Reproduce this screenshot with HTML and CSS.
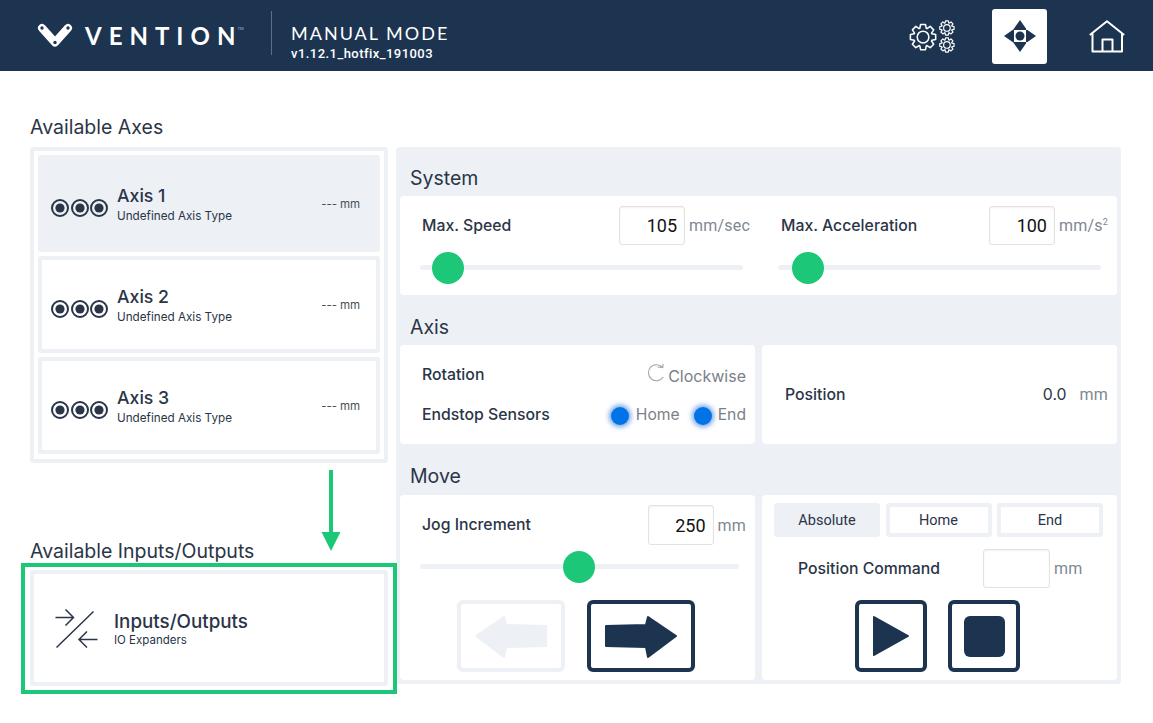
FILE: index.html
```html
<!DOCTYPE html>
<html lang="en">
<head>
<meta charset="utf-8">
<title>Manual Mode</title>
<link rel="stylesheet" href="styles.css">
</head>
<body>
<header class="topbar">
  <div class="brand">
    <svg class="brand-mark" viewBox="0 0 36 26" width="36" height="26">
      <path class="mark-line" d="M5 5 L18 19.5 L31 5"/>
      <circle class="mark-hole" cx="5" cy="5" r="1.7"/>
      <circle class="mark-hole" cx="31" cy="5" r="1.7"/>
      <circle class="mark-hole" cx="18" cy="19.5" r="1.7"/>
    </svg>
    <span class="brand-name">VENTIO<span class="brand-last">N</span></span><span class="brand-tm">TM</span>
  </div>
  <div class="mode">
    <div class="mode-name">MANUAL MODE</div>
    <div class="mode-version">v1.12.1_hotfix_191003</div>
  </div>
  <nav class="nav">
    <svg class="nav-gears" viewBox="0 0 46 33" width="46" height="33">
      <defs>
        <g id="gear">
          <polygon points="9.26,4.48 9.9,1.2 14.1,1.2 14.74,4.48 15.38,4.75 18.15,2.88 21.12,5.85 19.25,8.62 19.52,9.26 22.8,9.9 22.8,14.1 19.52,14.74 19.25,15.38 21.12,18.15 18.15,21.12 15.38,19.25 14.74,19.52 14.1,22.8 9.9,22.8 9.26,19.52 8.62,19.25 5.85,21.12 2.88,18.15 4.75,15.38 4.48,14.74 1.2,14.1 1.2,9.9 4.48,9.26 4.75,8.62 2.88,5.85 5.85,2.88 8.62,4.75"/>
          <circle cx="12" cy="12" r="5"/>
        </g>
      </defs>
      <use href="#gear" class="gear-line gear-big" transform="translate(0 3) scale(1.17)"/>
      <use href="#gear" class="gear-line gear-small" transform="translate(30 0) scale(0.66)"/>
      <use href="#gear" class="gear-line gear-small" transform="translate(30 17) scale(0.66)"/>
    </svg>
    <div class="nav-active">
      <svg viewBox="0 0 32 32" width="32" height="32">
        <path class="nav-solid" d="M16 0 L23 10 H9 Z M16 32 L9 22 H23 Z M0 16 L10 9 V23 Z M32 16 L22 9 V23 Z"/>
        <circle class="nav-solid" cx="16" cy="16" r="4.5"/>
      </svg>
    </div>
    <svg class="nav-home" viewBox="0 0 36 33" width="36" height="33">
      <path class="home-line" d="M0.8 15 L18 1.2 L35.2 15 M3.5 13 V31.5 H33 V13 M13.5 31.5 V19.5 H23.5 V31.5"/>
    </svg>
  </nav>
</header>

<main class="page">
  <aside class="side">
    <h2 class="heading">Available Axes</h2>
    <div class="axis-list">
      <div class="axis-item is-active">
        <span class="dots">
          <svg viewBox="0 0 18 18" width="18" height="18"><circle class="ring" cx="9" cy="9" r="8"/><circle class="pip" cx="9" cy="9" r="4.6"/></svg>
          <svg viewBox="0 0 18 18" width="18" height="18"><circle class="ring" cx="9" cy="9" r="8"/><circle class="pip" cx="9" cy="9" r="4.6"/></svg>
          <svg viewBox="0 0 18 18" width="18" height="18"><circle class="ring" cx="9" cy="9" r="8"/><circle class="pip" cx="9" cy="9" r="4.6"/></svg>
        </span>
        <span class="axis-text"><b class="axis-name">Axis 1</b><small class="axis-type">Undefined Axis Type</small></span>
        <span class="axis-pos">--- mm</span>
      </div>
      <div class="axis-item">
        <span class="dots">
          <svg viewBox="0 0 18 18" width="18" height="18"><circle class="ring" cx="9" cy="9" r="8"/><circle class="pip" cx="9" cy="9" r="4.6"/></svg>
          <svg viewBox="0 0 18 18" width="18" height="18"><circle class="ring" cx="9" cy="9" r="8"/><circle class="pip" cx="9" cy="9" r="4.6"/></svg>
          <svg viewBox="0 0 18 18" width="18" height="18"><circle class="ring" cx="9" cy="9" r="8"/><circle class="pip" cx="9" cy="9" r="4.6"/></svg>
        </span>
        <span class="axis-text"><b class="axis-name">Axis 2</b><small class="axis-type">Undefined Axis Type</small></span>
        <span class="axis-pos">--- mm</span>
      </div>
      <div class="axis-item">
        <span class="dots">
          <svg viewBox="0 0 18 18" width="18" height="18"><circle class="ring" cx="9" cy="9" r="8"/><circle class="pip" cx="9" cy="9" r="4.6"/></svg>
          <svg viewBox="0 0 18 18" width="18" height="18"><circle class="ring" cx="9" cy="9" r="8"/><circle class="pip" cx="9" cy="9" r="4.6"/></svg>
          <svg viewBox="0 0 18 18" width="18" height="18"><circle class="ring" cx="9" cy="9" r="8"/><circle class="pip" cx="9" cy="9" r="4.6"/></svg>
        </span>
        <span class="axis-text"><b class="axis-name">Axis 3</b><small class="axis-type">Undefined Axis Type</small></span>
        <span class="axis-pos">--- mm</span>
      </div>
    </div>
    <svg class="hint-arrow" viewBox="0 0 24 81" width="24" height="81">
      <path class="hint-shaft" d="M12 0 V66"/>
      <path class="hint-head" d="M2.5 62 H21.5 L12 81 Z"/>
    </svg>
    <h2 class="heading heading-io">Available Inputs/Outputs</h2>
    <div class="io-highlight">
      <div class="io-card">
        <svg class="io-icon" viewBox="0 0 44 42" width="44" height="42">
          <path class="io-line" d="M0.5 9.5 H18.5 M10.5 1.5 L18.5 9.5 L10.5 17.5 M38.5 3.5 L1.5 39.5 M42.5 31.5 H24 M32 23.5 L24 31.5 L32 39.5"/>
        </svg>
        <span class="axis-text"><b class="io-name">Inputs/Outputs</b><small class="io-type">IO Expanders</small></span>
      </div>
    </div>
  </aside>

  <section class="panel">
    <h2 class="heading section-title section-first">System</h2>
    <div class="card card-system">
      <div class="control">
        <div class="row">
          <span class="label">Max. Speed</span>
          <input class="num" value="105" aria-label="Max. Speed">
          <span class="unit">mm/sec</span>
        </div>
        <div class="track"><span class="thumb" style="left:8.7%"></span></div>
      </div>
      <div class="control">
        <div class="row">
          <span class="label">Max. Acceleration</span>
          <input class="num" value="100" aria-label="Max. Acceleration">
          <span class="unit">mm/s<sup class="sup">2</sup></span>
        </div>
        <div class="track"><span class="thumb" style="left:9.3%"></span></div>
      </div>
    </div>

    <h2 class="heading section-title">Axis</h2>
    <div class="split">
      <div class="card card-axis">
        <div class="status-row">
          <span class="label">Rotation</span>
          <span class="status status-rotation">
            <svg class="rotate-icon" viewBox="0 0 19 19" width="19" height="19">
              <path class="rotate-line" d="M16.5 3.5 A8 8 0 1 0 17.2 13 M11.5 3 L16.8 3.5 L17 0"/>
            </svg>
            <span class="status-text">Clockwise</span>
          </span>
        </div>
        <div class="status-row">
          <span class="label">Endstop Sensors</span>
          <span class="status status-sensors">
            <i class="led"></i><span class="status-text">Home</span>
            <i class="led led-end"></i><span class="status-text">End</span>
          </span>
        </div>
      </div>
      <div class="card card-position">
        <span class="label">Position</span>
        <span class="pos-value">0.0</span>
        <span class="unit pos-unit">mm</span>
      </div>
    </div>

    <h2 class="heading section-title section-move">Move</h2>
    <div class="split">
      <div class="card card-jog">
        <div class="control control-jog">
          <div class="row">
            <span class="label">Jog Increment</span>
            <input class="num num-tall" value="250" aria-label="Jog Increment">
            <span class="unit">mm</span>
          </div>
          <div class="track track-jog"><span class="thumb" style="left:49.8%"></span></div>
        </div>
        <div class="jog-buttons">
          <button class="icon-btn wide is-disabled" type="button" aria-label="Jog left">
            <svg viewBox="0 0 72 44" width="72" height="44"><path class="btn-shape" d="M71 12 L31 11 L29 3 L1 22 L29 43 L31 33 L71 32 Z"/></svg>
          </button>
          <button class="icon-btn wide" type="button" aria-label="Jog right">
            <svg viewBox="0 0 72 44" width="72" height="44"><path class="btn-shape" d="M1 12 L41 11 L43 3 L71 22 L43 43 L41 33 L1 32 Z"/></svg>
          </button>
        </div>
      </div>
      <div class="card card-command">
        <div class="tabs">
          <span class="tab is-active">Absolute</span>
          <span class="tab">Home</span>
          <span class="tab">End</span>
        </div>
        <div class="command-row">
          <span class="label">Position Command</span>
          <input class="num num-command" aria-label="Position Command">
          <span class="unit">mm</span>
        </div>
        <div class="command-buttons">
          <button class="icon-btn" type="button" aria-label="Play">
            <svg viewBox="0 0 38 42" width="38" height="42"><path class="btn-shape" d="M2 2 L36 21 L2 40 Z"/></svg>
          </button>
          <button class="icon-btn" type="button" aria-label="Stop">
            <span class="stop-square"></span>
          </button>
        </div>
      </div>
    </div>
  </section>
</main>
</body>
</html>
```

FILE: styles.css
```css
* { box-sizing: border-box; }
html, body { margin: 0; padding: 0; }
body {
  width: 1153px;
  height: 723px;
  overflow: hidden;
  background: #fff;
  color: #2a3547;
  font-family: "Inter", "Lato", sans-serif;
}

/* header */
.topbar {
  display: flex;
  align-items: center;
  height: 71px;
  padding-left: 37px;
  background: #1d3451;
  color: #fff;
}
.brand {
  display: flex;
  align-items: center;
  width: 235px;
  height: 44px;
  margin-top: -5px;
  border-right: 1px solid #5c6f86;
}
.brand-mark { flex: none; margin-top: 5px; }
.brand-name {
  margin-left: 12px;
  margin-top: 5px;
  font-family: "Lato", sans-serif;
  font-size: 24px;
  font-weight: 700;
  letter-spacing: 7px;
  line-height: 24px;
}
.brand-last { letter-spacing: 0; }
.mark-line { fill: none; stroke: #fff; stroke-width: 8; stroke-linecap: round; stroke-linejoin: round; }
.mark-hole { fill: #1d3451; }
.brand-tm { font-size: 4px; line-height: 5px; margin: -9px 0 0 2px; color: #aeb8c5; }
.mode { margin-left: 19px; margin-top: 14px; }
.mode-name {
  font-family: "Lato", sans-serif;
  font-size: 18px;
  letter-spacing: 2px;
  line-height: 20px;
}
.mode-version {
  font-family: "Roboto", sans-serif;
  font-size: 13px;
  font-weight: 500;
  letter-spacing: 0.45px;
  line-height: 19px;
  margin-top: 1px;
}
.nav { display: flex; align-items: center; margin-left: auto; padding: 1px 28px 0 0; }
.nav-gears { margin-right: 37px; }
.gear-line { fill: none; stroke: #fff; stroke-linejoin: round; }
.gear-big { stroke-width: 1.3; }
.gear-small { stroke-width: 1.8; }
.nav-active {
  display: flex;
  align-items: center;
  justify-content: center;
  width: 55px;
  height: 55px;
  border-radius: 3px;
  background: #fff;
}
.nav-solid { fill: #1d3451; }
.nav-home { margin-left: 42px; }
.home-line { fill: none; stroke: #fff; stroke-width: 2; stroke-linejoin: round; }

/* page */
.page { display: flex; padding: 44px 0 0 30px; }
.heading {
  margin: 0;
  font-size: 19.5px;
  font-weight: 400;
  line-height: 25px;
  color: #2a3547;
}

/* left column */
.side { position: relative; width: 358px; flex: none; margin-right: 8px; }
.axis-list {
  display: flex;
  flex-direction: column;
  gap: 4px;
  margin-top: 7px;
  padding: 4px 4px 5px;
  border: 4px solid #edf0f5;
  border-radius: 3px;
}
.axis-item {
  display: flex;
  align-items: center;
  height: 97px;
  padding: 0 16px 0 9px;
  border: 4px solid #edf0f5;
  border-radius: 3px;
}
.axis-item.is-active { background: #edf0f5; }
.dots { display: flex; gap: 1.5px; margin-top: 8px; }
.ring { fill: none; stroke: #2a3547; stroke-width: 2; }
.pip { fill: #2a3547; }
.axis-text { display: flex; flex-direction: column; margin-left: 9px; margin-top: 2px; }
.axis-name { font-size: 17.7px; font-weight: 500; line-height: 22px; }
.axis-type { font-size: 11.7px; line-height: 15px; margin-top: 2px; }
.axis-pos { margin-left: auto; font-size: 11.5px; letter-spacing: -.1px; color: #4b4f58; }

.hint-arrow { position: absolute; left: 289px; top: 355px; z-index: 2; }
.hint-shaft { stroke: #1cc878; stroke-width: 4; fill: none; }
.hint-head { fill: #1cc878; }

.heading-io { margin-top: 76px; line-height: 24px; }
.io-highlight {
  position: relative;
  z-index: 1;
  margin: 0 -9px;
  padding: 3px 5px 4px;
  border: 4px solid #1cc878;
}
.io-card {
  display: flex;
  align-items: center;
  height: 116px;
  padding-left: 21px;
  border: 4px solid #edf0f5;
  border-radius: 3px;
}
.io-icon { flex: none; margin-top: 1px; }
.io-line { fill: none; stroke: #2a3547; stroke-width: 1.5; }
.io-card .axis-text { margin-left: 15px; margin-top: 3px; }
.io-name { font-size: 18.8px; font-weight: 500; line-height: 22px; }
.io-type { font-size: 11.5px; line-height: 15px; }

/* right panel */
.panel {
  width: 725px;
  height: 537px;
  margin-top: 32px;
  padding: 0 4px 4px;
  background: #edf0f5;
  border-radius: 4px;
}
.section-title { margin: 20px 0 5px 10px; }
.section-first { margin-top: 19px; }
.section-move { margin-top: 20px; margin-bottom: 6px; }
.card { background: #fff; border-radius: 4px; }
.split { display: grid; grid-template-columns: 355px 355px; gap: 7px; }

.card-system {
  display: flex;
  gap: 28px;
  height: 99px;
  padding: 10px 0 0 20px;
}
.control { width: 330px; }
.control + .control .label { padding-left: 3px; }
.row { display: flex; align-items: center; }
.label { flex: 1; padding-left: 2px; font-size: 15.8px; font-weight: 500; color: #2a3547; }
.num {
  width: 66px;
  height: 39px;
  padding: 0 7px 0 0;
  border: 1px solid #e2e2e2;
  border-radius: 3px;
  box-shadow: inset 0 1px 2px rgba(0,0,0,.06);
  background: #fff;
  color: #111;
  font-family: "Roboto", sans-serif;
  font-size: 18px;
  text-align: right;
  outline: none;
}
.unit {
  margin-left: 4px;
  font-family: "Roboto", sans-serif;
  font-size: 16px;
  letter-spacing: .2px;
  color: #7e8894;
}
.sup { font-size: 9px; line-height: 0; }
.track {
  position: relative;
  width: 323px;
  height: 5px;
  margin-top: 20px;
  border-radius: 3px;
  background: #edf0f5;
}
.thumb {
  position: absolute;
  top: 50%;
  width: 32px;
  height: 32px;
  border-radius: 50%;
  background: #1cc878;
  transform: translate(-50%, -50%);
}

.card-axis { display: flex; flex-direction: column; justify-content: center; height: 99px; padding: 0 9px 0 20px; }
.status-row { display: flex; align-items: center; height: 40px; }
.status { display: flex; align-items: center; }
.status-rotation { align-items: flex-end; margin-top: 1px; }
.status-text { font-size: 16px; color: #7c8088; }
.status-sensors .status-text { font-size: 15.7px; }
.rotate-icon { margin: 0 3px 3px 0; }
.rotate-line { fill: none; stroke: #a5abb2; stroke-width: 1.2; }
.led {
  width: 18px;
  height: 18px;
  margin: 2px 7px 0 0;
  border-radius: 50%;
  background: #0073e6;
  box-shadow: 0 0 5px 2px rgba(0,90,210,.55);
}
.led-end { margin-left: 14px; margin-right: 6px; }

.card-position { display: flex; align-items: center; height: 99px; padding: 0 9px 0 21px; }
.pos-value { font-size: 15.8px; color: #2a3547; }
.pos-unit { margin-left: 13px; }

.card-jog { height: 185px; padding: 10px 0 0 20px; }
.control-jog { width: 326px; }
.control-jog .label { margin-top: -2px; }
.num-tall { height: 40px; }
.track-jog { width: 319px; margin-top: 19px; }
.jog-buttons { display: flex; gap: 22px; margin: 31px 0 0 37px; }
.icon-btn {
  display: flex;
  align-items: center;
  justify-content: center;
  width: 72px;
  height: 72px;
  padding: 0;
  border: 4px solid #1d3451;
  border-radius: 6px;
  background: #fff;
}
.icon-btn.wide { width: 108px; }
.btn-shape { fill: #1d3451; stroke: #1d3451; stroke-width: 2; stroke-linejoin: round; }
.is-disabled { border-color: #edf0f5; }
.is-disabled .btn-shape { fill: #edf0f5; stroke: #edf0f5; }
.stop-square { width: 41px; height: 41px; border-radius: 6px; background: #1d3451; }

.card-command { height: 185px; padding: 8px 0 0 12px; }
.tabs { display: flex; gap: 5.5px; }
.tab {
  display: flex;
  align-items: center;
  justify-content: center;
  width: 106px;
  height: 34px;
  border: 4px solid #edf0f5;
  border-radius: 3px;
  font-family: "Roboto", sans-serif;
  font-size: 14.5px;
  color: #2a3547;
}
.tab.is-active { background: #edf0f5; }
.command-row { display: flex; align-items: center; margin-top: 12px; padding-left: 22px; }
.command-row .label { flex: none; width: 187px; }
.num-command { width: 67px; }
.command-buttons { display: flex; gap: 21px; margin: 12px 0 0 81px; }
```
